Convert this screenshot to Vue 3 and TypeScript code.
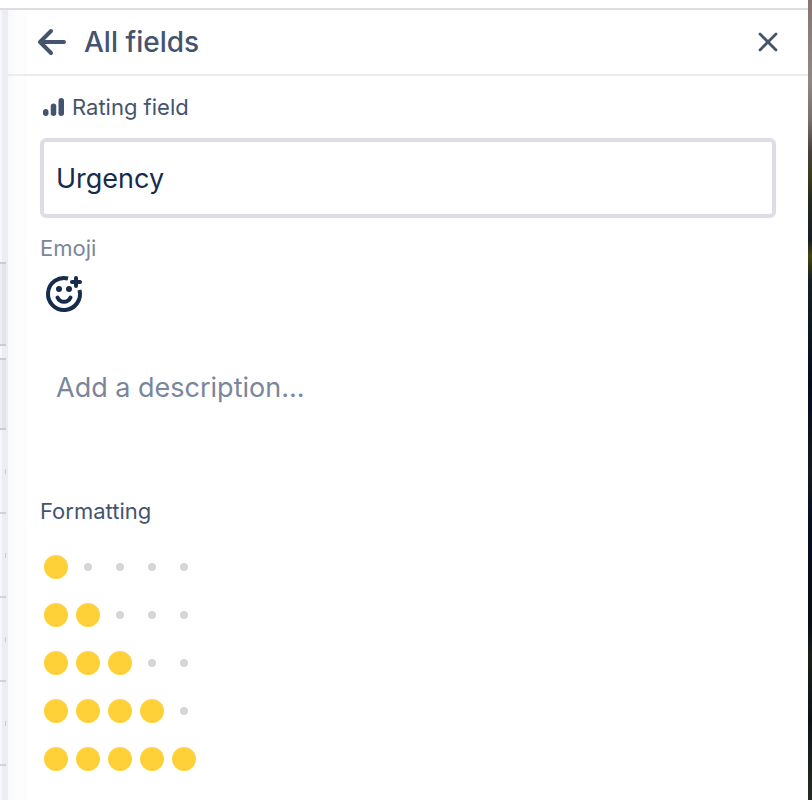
<script setup lang="ts">
import { ref } from 'vue'

const fieldName = ref('Urgency')
const description = ref('')
const max = 5
const ratings: number[] = [1, 2, 3, 4, 5]
const gridRows: number[] = [1, 2, 3, 4, 5]
</script>

<template>
  <div class="shell">
    <div class="window">
      <div class="board" aria-hidden="true">
        <div class="board-head"></div>
        <div class="board-cell"></div>
        <div class="board-cell board-cell-low"></div>
        <div v-for="row in gridRows" :key="row" class="board-row"><i class="tick"></i></div>
      </div>
      <aside class="panel">
        <header class="panel-head">
          <button class="icon-button" type="button" aria-label="Back">
            <svg width="32" height="32" viewBox="0 0 32 32" fill="none" stroke="currentColor" stroke-width="4" stroke-linecap="round" stroke-linejoin="round">
              <path d="M15 5 4 16 15 27M4 16H28" />
            </svg>
          </button>
          <h1 class="title">All fields</h1>
          <button class="icon-button" type="button" aria-label="Close">
            <svg width="32" height="32" viewBox="0 0 32 32" fill="none" stroke="currentColor" stroke-width="2.800" stroke-linecap="round">
              <path d="M8 8 24 24M24 8 8 24" />
            </svg>
          </button>
        </header>
        <div class="panel-body">
          <label class="kind" for="field-name">
            <svg width="24" height="24" viewBox="0 0 24 24" fill="currentColor">
              <rect x="1" y="14" width="5.500" height="7" rx="2.750" />
              <rect x="8.750" y="8.500" width="5.500" height="12.500" rx="2.750" />
              <rect x="16.500" y="3" width="5.500" height="18" rx="2.750" />
            </svg>
            Rating field
          </label>
          <input id="field-name" v-model="fieldName" class="name" type="text" />
          <div id="emoji-label" class="caption">Emoji</div>
          <button class="emoji" type="button" aria-labelledby="emoji-label">
            <svg width="40" height="40" viewBox="0 0 40 40" fill="none" stroke="currentColor">
              <path d="M24 4.500A16 16 0 1 0 35.500 16" stroke-width="4" />
              <path d="M13.500 23.500c1.200 2.700 3.500 4.300 6.500 4.300s5.300-1.600 6.500-4.300" stroke-width="4" stroke-linecap="round" />
              <circle cx="15" cy="15" r="3" fill="currentColor" stroke="none" />
              <circle cx="25" cy="15" r="3" fill="currentColor" stroke="none" />
              <path d="M32 4v8M28 8h8" stroke-width="4" stroke-linecap="round" />
            </svg>
          </button>
          <textarea v-model="description" class="description" rows="1" placeholder="Add a description..." aria-label="Description"></textarea>
          <h2 class="section">Formatting</h2>
          <ul class="scale">
            <li v-for="value in ratings" :key="value" class="rating" :aria-label="`${value} / ${max}`">
              <span v-for="n in max" :key="n" class="slot">
                <span class="dot" :class="{ filled: n <= value }"></span>
              </span>
            </li>
          </ul>
        </div>
      </aside>
    </div>
    <div class="backdrop" aria-hidden="true"></div>
  </div>
</template>

<style>
body {
  margin: 0;
}
</style>

<style scoped>
.shell {
  display: flex;
  height: 100vh;
  overflow: hidden;
  background: #fff;
  color: #44546f;
  font-family: Inter, 'Liberation Sans', sans-serif;
}
.window {
  display: flex;
  flex: 1;
  min-width: 0;
  margin-top: 8px;
  border-top: 2px solid #dddde4;
}
.board {
  display: flex;
  flex-direction: column;
  flex: none;
  box-sizing: border-box;
  width: 8px;
  padding-right: 2px;
  background: linear-gradient(90deg, #f6f7f9 2px, #ecedf2 2px);
}
.board-head {
  flex: none;
  height: 252px;
}
.board-cell {
  flex: none;
  height: 80px;
  border: solid #c8ccd7;
  border-width: 2px 0;
  background: linear-gradient(90deg, #edeef2 2px, #e3e4ea 2px);
}
.board-cell-low {
  height: 68px;
  margin-top: 12px;
}
.board-row {
  display: flex;
  flex: none;
  align-items: center;
  justify-content: flex-end;
  height: 82px;
  border-bottom: 2px solid #ced2dc;
}
.tick {
  width: 1px;
  height: 5px;
  background: #c9cbd0;
}
.panel {
  flex: 1;
  min-width: 0;
  background: linear-gradient(90deg, #f8f9fa, #fcfcfd 6px, #fdfdfd 18px, #fff 20px);
}
.panel-head {
  display: flex;
  align-items: center;
  height: 64px;
  padding: 0 24px 0 28px;
  border-bottom: 2px solid #ebecef;
}
.icon-button {
  display: flex;
  padding: 0;
  border: 0;
  background: none;
  color: #44546f;
}
.title {
  flex: 1;
  margin: 0 0 0 16px;
  font-size: 28px;
  font-weight: 500;
  line-height: 36px;
}
.panel-body {
  display: flex;
  flex-direction: column;
  align-items: flex-start;
  padding: 16px 32px;
}
.kind {
  display: flex;
  align-items: center;
  gap: 6px;
  padding-left: 2px;
  font-size: 22px;
  line-height: 30px;
}
.name {
  box-sizing: border-box;
  width: 100%;
  height: 80px;
  margin-top: 16px;
  padding: 0 12px;
  border: 4px solid #dddee5;
  border-radius: 6px;
  background: #fff;
  color: #172b4d;
  font-family: inherit;
  font-size: 27px;
}
.caption {
  margin-top: 14px;
  color: #7a869a;
  font-size: 22px;
  line-height: 32px;
}
.emoji {
  display: flex;
  margin: 10px 0 0 4px;
  padding: 0;
  border: 0;
  background: none;
  color: #172b4d;
}
.description {
  box-sizing: border-box;
  width: 100%;
  height: 96px;
  margin-top: 40px;
  padding: 16px;
  border: 0;
  background: none;
  color: #172b4d;
  font-family: inherit;
  font-size: 27px;
  line-height: 36px;
  resize: none;
}
.description::placeholder {
  color: #7a869a;
  opacity: 1;
}
.section {
  margin: 45px 0 0;
  font-size: 22px;
  font-weight: 400;
  line-height: 32px;
}
.scale {
  display: grid;
  gap: 16px;
  margin: 24px 0 0;
  padding: 0;
  list-style: none;
}
.rating {
  display: flex;
}
.slot {
  display: grid;
  place-items: center;
  width: 32px;
  height: 32px;
}
.dot {
  width: 8px;
  height: 8px;
  border-radius: 50%;
  background: #d5d5d5;
}
.dot.filled {
  width: 24px;
  height: 24px;
  background: #ffd138;
}
.backdrop {
  flex: none;
  width: 4px;
  background: linear-gradient(#85776f, #928880 10%, #7a7069 15%, #494039 19%, #3d3b20 22%, #252a1b 25%, #161f28 30%, #45440f 32%, #142025 35%, #0b1921 41%, #020d1b 48%, #121b20 59%, #03101d 65%, #080e16 78%, #182018 82%, #0b1519 90%, #292b24 100%);
}
</style>
